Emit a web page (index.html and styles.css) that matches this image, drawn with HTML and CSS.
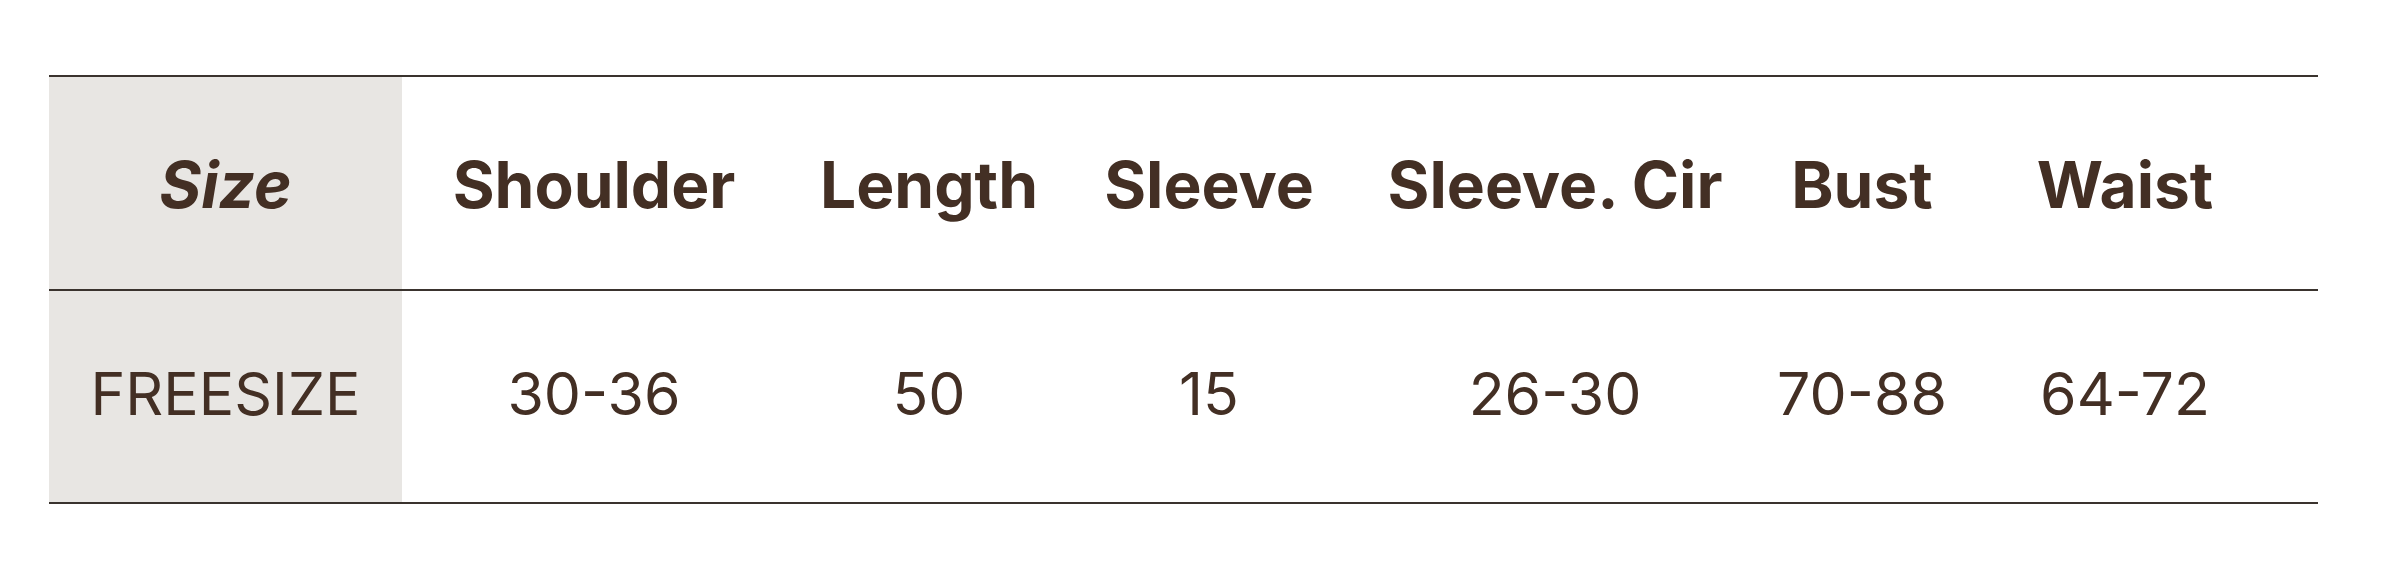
FILE: index.html
```html
<!DOCTYPE html>
<html lang="en">
<head>
    <meta charset="UTF-8">
    <meta name="viewport" content="width=device-width, initial-scale=1.0">
    <title>Size Chart</title>
    <link rel="stylesheet" href="styles.css">
</head>
<body>
    <div class="size-chart">
        <div class="row head">
            <div class="cell label"><em>Size</em></div>
            <div class="cell">Shoulder</div>
            <div class="cell">Length</div>
            <div class="cell">Sleeve</div>
            <div class="cell">Sleeve. Cir</div>
            <div class="cell">Bust</div>
            <div class="cell">Waist</div>
            <div class="cell"></div>
        </div>
        <div class="row body">
            <div class="cell label">FREESIZE</div>
            <div class="cell">30-36</div>
            <div class="cell">50</div>
            <div class="cell">15</div>
            <div class="cell">26-30</div>
            <div class="cell">70-88</div>
            <div class="cell">64-72</div>
            <div class="cell"></div>
        </div>
    </div>
</body>
</html>
```

FILE: styles.css
```css
body {
    margin: 0;
    padding: 75px 0 0 49px;
    background: #ffffff;
    font-family: Inter, "Open Sans", sans-serif;
    color: #432f24;
}

.size-chart {
    width: 2269px;
    border-bottom: 2px solid #3a332e;
}

.row {
    display: grid;
    grid-template-columns: 353px 384px 286px 274px 418px 196px 330px 28px;
    border-top: 2px solid #3a332e;
}

.row.head {
    height: 212px;
}

.row.body {
    height: 211px;
}

.cell {
    display: flex;
    align-items: center;
    justify-content: center;
    white-space: nowrap;
}

.cell.label {
    background-color: #e8e6e3;
}

.head .cell {
    font-size: 64px;
    font-weight: 700;
    padding-top: 3px;
}

.head em {
    font-style: italic;
}

.body .cell {
    font-size: 59px;
    font-weight: 400;
    padding-bottom: 6px;
}
```
